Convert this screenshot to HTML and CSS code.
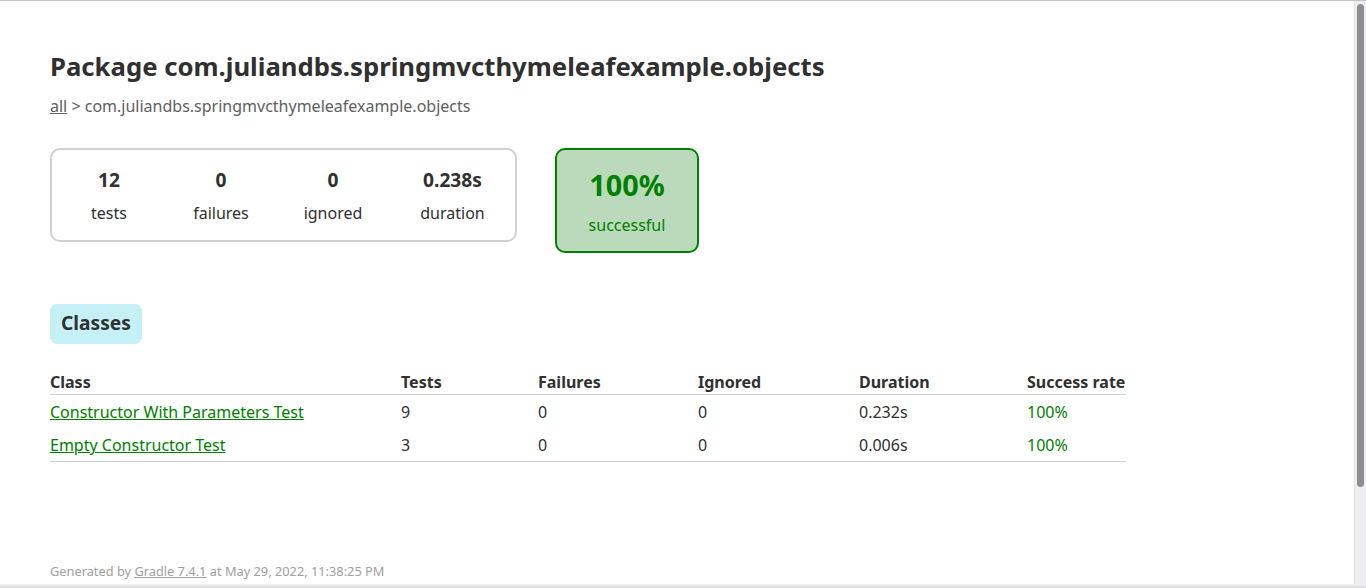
FILE: index.html
```html
<!DOCTYPE html>
<html lang="en">
<head>
<meta charset="utf-8">
<title>Test results - Package com.juliandbs.springmvcthymeleafexample.objects</title>
<link rel="stylesheet" href="styles.css">
</head>
<body>
<div class="frame-top"></div>
<div id="content">
  <h1>Package com.juliandbs.springmvcthymeleafexample.objects</h1>
  <div class="breadcrumbs"><a href="#">all</a> &gt; com.juliandbs.springmvcthymeleafexample.objects</div>
  <div class="summary">
    <div class="summary-group">
      <div class="info-box"><div class="counter">12</div><p>tests</p></div>
      <div class="info-box"><div class="counter">0</div><p>failures</p></div>
      <div class="info-box"><div class="counter">0</div><p>ignored</p></div>
      <div class="info-box duration"><div class="counter">0.238s</div><p>duration</p></div>
    </div>
    <div class="success-rate">
      <div class="percent">100%</div>
      <p>successful</p>
    </div>
  </div>
  <ul class="tab-links">
    <li class="selected">Classes</li>
  </ul>
  <table class="classes">
    <thead>
      <tr><th class="c1">Class</th><th class="c2">Tests</th><th class="c3">Failures</th><th class="c4">Ignored</th><th class="c5">Duration</th><th class="c6">Success rate</th></tr>
    </thead>
    <tbody>
      <tr><td class="success"><a href="#">Constructor With Parameters Test</a></td><td>9</td><td>0</td><td>0</td><td>0.232s</td><td class="success">100%</td></tr>
      <tr><td class="success"><a href="#">Empty Constructor Test</a></td><td>3</td><td>0</td><td>0</td><td>0.006s</td><td class="success">100%</td></tr>
    </tbody>
  </table>
  <div id="footer">Generated by <a href="#">Gradle 7.4.1</a> at May 29, 2022, 11:38:25 PM</div>
</div>
<div class="scrollbar"><div class="thumb"></div></div>
<div class="frame-bottom"></div>
</body>
</html>
```
FILE: styles.css
```css
html, body {
  margin: 0;
  padding: 0;
  background: #ffffff;
}
body {
  font-family: "Noto Sans", "Open Sans", sans-serif;
  font-size: 16px;
  color: #303030;
  overflow: hidden;
}
a, a:visited { color: #303030; }

.frame-top {
  height: 1px;
  background: #c4c4c4;
}

#content {
  padding: 0 50px;
}

h1 {
  margin: 48px 0 0;
  font-size: 25.7px;
  font-weight: bold;
  line-height: 36px;
  white-space: nowrap;
}

.breadcrumbs {
  margin-top: 10px;
  font-size: 16px;
  line-height: 22px;
  color: #606060;
}
.breadcrumbs a { color: #606060; }

.summary {
  display: flex;
  align-items: flex-start;
  margin-top: 31px;
}

.summary-group {
  display: flex;
  gap: 2px;
  border: 2px solid #d0d0d0;
  border-radius: 10px;
  padding: 2px 0 2px 2px;
}

.info-box {
  width: 110px;
  padding: 15px 0 14px;
  text-align: center;
}
.info-box.duration { width: 125px; }
.info-box p {
  margin: 0;
  font-size: 16px;
  line-height: 22px;
}

.counter {
  font-size: 19.2px;
  font-weight: bold;
  line-height: 26px;
  margin-bottom: 9px;
}

.success-rate {
  width: 140px;
  margin-left: 38px;
  padding: 15px 0;
  text-align: center;
  border: 2px solid #008000;
  border-radius: 10px;
  background: #bbd9bb;
  color: #008000;
}
.success-rate p {
  margin: 0;
  font-size: 16px;
  line-height: 22px;
}
.percent {
  font-size: 28.8px;
  font-weight: bold;
  line-height: 40px;
  margin-bottom: 9px;
}

.tab-links {
  list-style: none;
  display: flex;
  margin: 51px 0 0;
  padding: 0;
}
.tab-links li {
  padding: 5px 10px 7px;
  border: 1px solid #c5f0f5;
  border-radius: 7px;
  background: #c5f0f5;
  font-size: 19.2px;
  font-weight: bold;
  line-height: 26px;
}

.classes {
  border-collapse: collapse;
  margin-top: 27px;
  font-size: 16px;
}
.classes th, .classes td {
  text-align: left;
  padding: 0;
  white-space: nowrap;
}
.classes th {
  font-weight: bold;
  line-height: 22px;
  padding-bottom: 1px;
  border-bottom: 1px solid #d0d0d0;
}
.classes td {
  line-height: 22px;
  padding-top: 6px;
  padding-bottom: 5px;
}
.classes tbody tr:last-child td {
  border-bottom: 1px solid #d0d0d0;
}
.classes .c1 { width: 351px; }
.classes .c2 { width: 137px; }
.classes .c3 { width: 160px; }
.classes .c4 { width: 161px; }
.classes .c5 { width: 168px; }
.classes .c6 { width: 99px; }

.success, .success a, .success a:visited { color: #008000; }

#footer {
  margin-top: 100px;
  font-size: 12.8px;
  line-height: 18px;
  color: #a0a0a0;
  white-space: nowrap;
}
#footer a { color: #a0a0a0; }

.scrollbar {
  position: fixed;
  top: 1px;
  right: 0;
  bottom: 0;
  width: 11px;
  background: #eeeef0;
  border-left: 1px solid #e4e4e6;
}
.thumb {
  margin: 3px 0 0 2px;
  width: 7px;
  height: 483px;
  border-radius: 4px;
  background: #8e8e8e;
}

.frame-bottom {
  position: fixed;
  left: 0;
  right: 0;
  bottom: 0;
  height: 4px;
  background: linear-gradient(#f2f2f2, #d8d8d8);
}
```
